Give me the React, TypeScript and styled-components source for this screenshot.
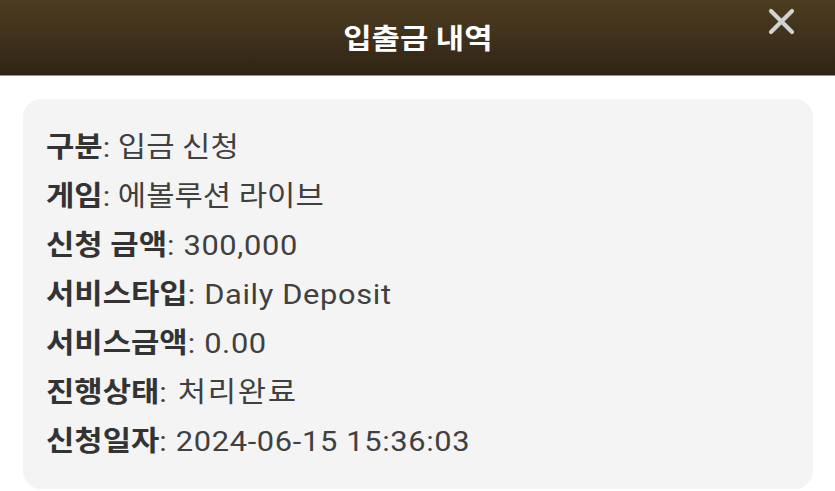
import React from "react";
import styled, { createGlobalStyle } from "styled-components";

const Global = createGlobalStyle`
  html, body { margin: 0; padding: 0; background: #ffffff; }
  body { font-family: Roboto, "Noto Sans CJK KR", sans-serif; }
`;

const Page = styled.div`
  width: 835px;
  height: 491px;
  background: #ffffff;
  display: flex;
  flex-direction: column;
  overflow: hidden;
`;

const Header = styled.header`
  position: relative;
  height: 75px;
  flex: 0 0 75px;
  background: linear-gradient(180deg, #4d3c1f 0%, #3f311c 50%, #2f2414 100%);
  border-bottom: 1px solid #9a8f84;
  display: flex;
  align-items: center;
  justify-content: center;
`;

const Title = styled.h1`
  margin: 0;
  margin-top: -2px;
  font-family: Roboto, "Noto Sans CJK KR", sans-serif;
  font-size: 28px;
  font-weight: 700;
  color: #ffffff;
  transform: scaleX(1.1);
`;

const Close = styled.button`
  position: absolute;
  right: 40px;
  top: 7px;
  width: 28px;
  height: 28px;
  padding: 0;
  border: none;
  background: transparent;
  display: flex;
  align-items: center;
  justify-content: center;
`;

const Body = styled.main`
  padding: 23px 22px 4px 23px;
`;

const Card = styled.section`
  background: #f4f4f4;
  border-radius: 18px;
  padding: 24px 24px 23px 23px;
  display: flex;
  flex-direction: column;
`;

const Row = styled.div`
  height: 49px;
  line-height: 49px;
  font-size: 28px;
  color: #404040;
  white-space: nowrap;
`;

const Stretch = styled.span`
  display: inline-block;
  transform: scaleX(1.1);
  transform-origin: left center;
`;

const Label = styled.span`
  font-weight: 700;
  color: #333333;
`;

const Value = styled.span<{ $latin?: boolean; $wide?: boolean }>`
  font-weight: 400;
  letter-spacing: ${(p) => (p.$latin ? "0.6px" : p.$wide ? "1.5px" : "0")};
`;

const rows: [string, string, boolean, boolean][] = [
  ["구분", "입금 신청", false, false],
  ["게임", "에볼루션 라이브", false, false],
  ["신청 금액", "300,000", true, false],
  ["서비스타입", "Daily Deposit", true, false],
  ["서비스금액", "0.00", true, false],
  ["진행상태", "처리완료", false, true],
  ["신청일자", "2024-06-15 15:36:03", true, false],
];

export default function App() {
  return (
    <Page>
      <Global />
      <Header>
        <Title>입출금 내역</Title>
        <Close aria-label="닫기">
          <svg width="27" height="27" viewBox="0 0 27 27">
            <path d="M3 3 L24 24 M24 3 L3 24" stroke="#d2d2d2" strokeWidth="4.2" strokeLinecap="round" />
          </svg>
        </Close>
      </Header>
      <Body>
        <Card>
          {rows.map(([k, v, latin, wide]) => (
            <Row key={k}>
              <Stretch>
                <Label>{k}</Label>
                <Value $latin={latin} $wide={wide}>: {v}</Value>
              </Stretch>
            </Row>
          ))}
        </Card>
      </Body>
    </Page>
  );
}
